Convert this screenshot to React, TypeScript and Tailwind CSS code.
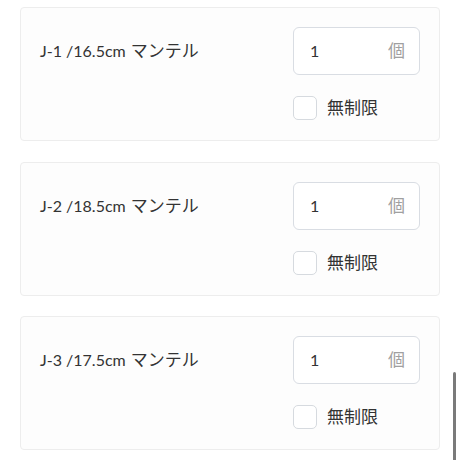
import React from 'react';

const items = [
  { id: 1, code: 'J-1 /16.5cm', name: 'マンテル', qty: '1' },
  { id: 2, code: 'J-2 /18.5cm', name: 'マンテル', qty: '1' },
  { id: 3, code: 'J-3 /17.5cm', name: 'マンテル', qty: '1' },
];

const font = { fontFamily: 'Lato, "Noto Sans CJK JP", sans-serif' };

export default function App() {
  return (
    <div className="relative w-[460px] h-[460px] overflow-hidden bg-white" style={font}>
      <div className="flex flex-col gap-[20.5px] pt-[7px] pl-[20px] w-[440px]">
        {items.map((item) => (
          <div
            key={item.id}
            className="flex justify-between bg-[#fdfdfd] border border-[#ededed] rounded-[4px] pl-[19px] pr-[19px] pt-[19px] pb-[20px]"
          >
            <div className="h-[48px] flex items-center gap-[5px] text-[16px] text-[#333]">
              <span>{item.code}</span>
              <span className="text-[17px]">{item.name}</span>
            </div>
            <div className="flex flex-col gap-[21px] w-[127px]">
              <div className="h-[48px] bg-white border border-[#d9dde3] rounded-[6px] flex items-center justify-between pl-[16px] pr-[14px]">
                <span className="text-[16px] text-[#333]">{item.qty}</span>
                <span className="text-[17px] text-[#a0a0a0]">個</span>
              </div>
              <div className="flex items-center gap-[10px] h-[24px]">
                <div className="w-[24px] h-[24px] bg-white border border-[#d6dadf] rounded-[5px]" />
                <span className="text-[17px] text-[#333]">無制限</span>
              </div>
            </div>
          </div>
        ))}
      </div>
      <div className="absolute left-[453px] top-[372px] w-[3px] h-[90px] bg-[#7a7a7a] rounded-full" />
    </div>
  );
}
